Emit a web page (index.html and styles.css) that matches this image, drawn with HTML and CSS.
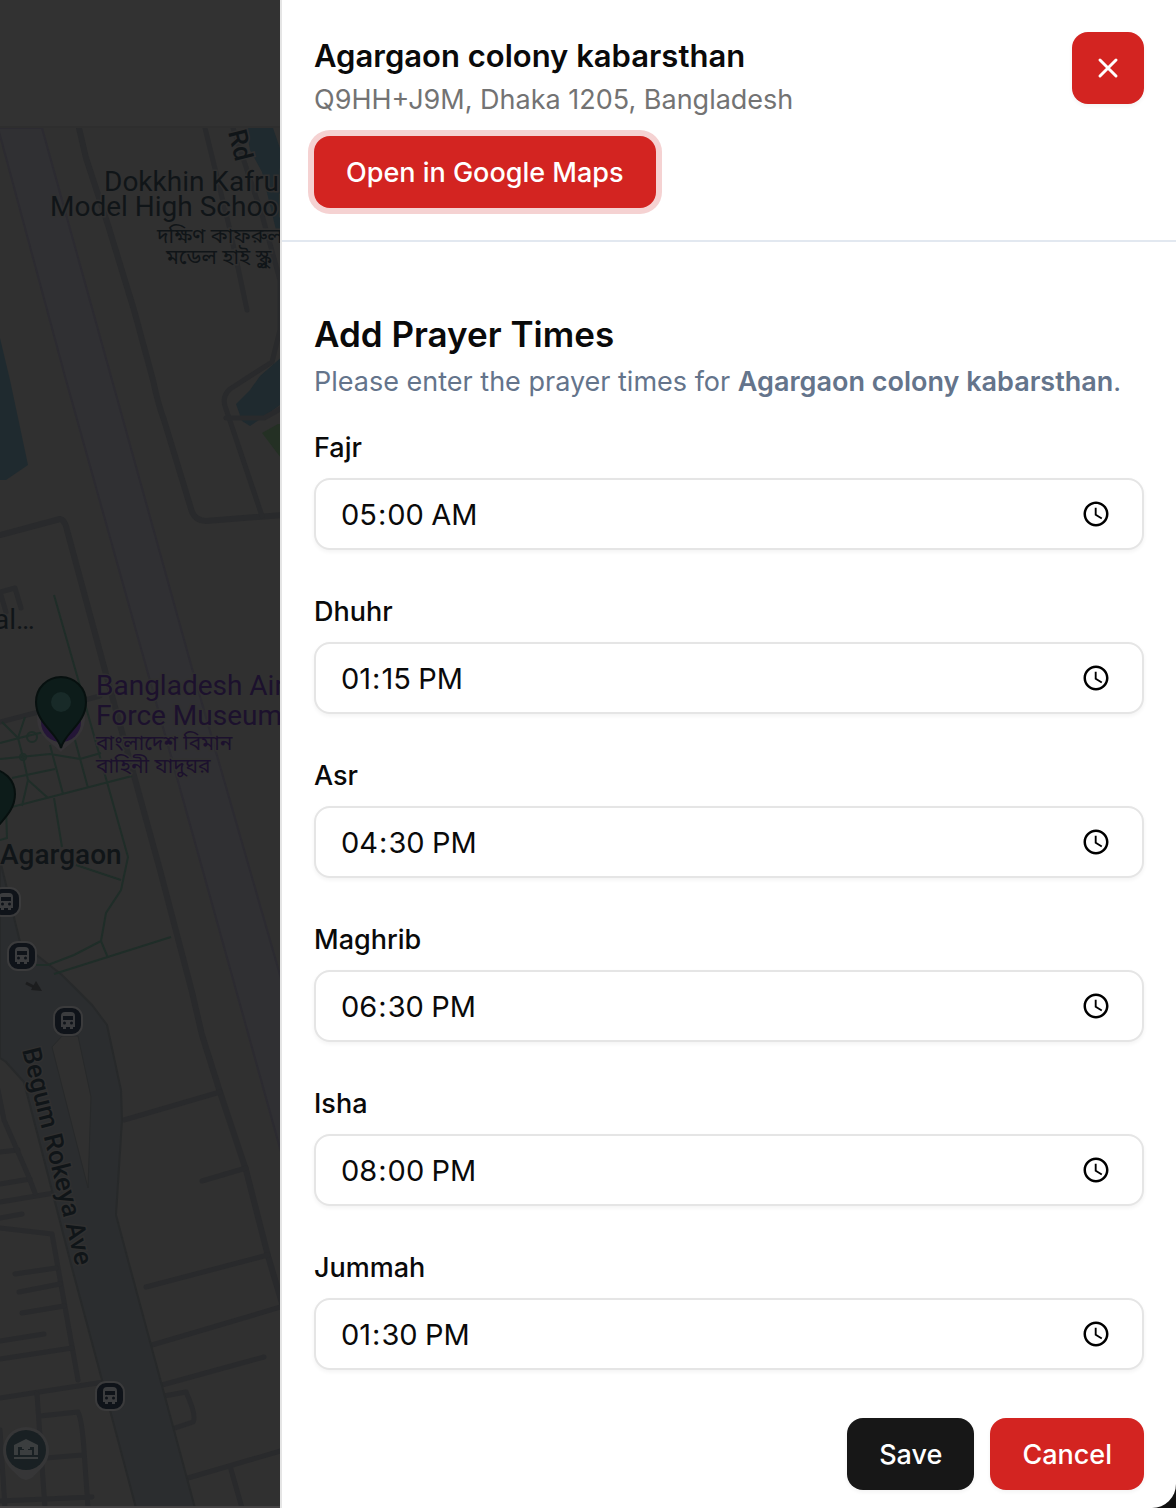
FILE: index.html
```html
<!DOCTYPE html>
<html lang="en-US">
<head>
<meta charset="utf-8">
<meta name="viewport" content="width=device-width, initial-scale=1">
<title>Add Prayer Times</title>
<link rel="stylesheet" href="styles.css">
</head>
<body>
<div class="app">
  <div class="backdrop">
    <div class="topbar"></div>
    <svg class="map" viewBox="0 128 280 1378" preserveAspectRatio="xMinYMin slice" role="img" aria-label="Map of Agargaon">
      <defs>
        <g id="bus">
          <rect x="-14" y="-14" width="28" height="28" rx="10" fill="#0f1319" stroke="#3b3b3c" stroke-width="2"/>
          <path fill="#3b3c3e" fill-rule="evenodd" d="M-7-5q0-4 4-4h6q4 0 4 4V6H5V8H2V6H-2V8H-5V6H-7ZM-5-5V-1H5V-5ZM-5 2a1.500 1.500 0 1 0 3 0a1.500 1.500 0 1 0-3 0ZM2 2a1.500 1.500 0 1 0 3 0a1.500 1.500 0 1 0-3 0Z"/>
        </g>
        <path id="pin" d="M0 46C-3 31-25 22-25 0A25 25 0 0 1 25 0C25 22 3 31 0 46Z" fill="#0d1c1a" stroke="#07100f" stroke-width="2"/>
      </defs>

      <path class="rail" d="M-2 128L66 380L149 677L236 990L350 1400V1220L280 975L193 672L112 380L42 128Z"/>

      <g class="water">
        <path d="M246 128H273L284 160V230H276L262 172L250 150Z"/>
        <path d="M0 338L10 380L28 465L6 480H0Z"/>
        <path d="M284 355L260 376L250 390L236 404L242 421L250 426L262 418L284 402Z"/>
      </g>
      <path d="M262 433L278 424L284 424V462Z" fill="#243024"/>

      <g class="roads">
        <path d="M79 128L86 158L108 225L134 310L153 380Q158 404 164 420L192 512Q196 521 206 521L282 515" stroke-width="6"/>
        <path d="M205 128L230 230L247 310"/>
        <path d="M233 128L262 215L280 280V330L272 362L230 389Q222 396 225 406L262 516"/>
        <path d="M226 418H264L282 408"/>
        <path d="M0 535L60 519Q65 520 67 530L106 674L160 870L192 992L202 1035L220 1092L246 1170L268 1256L290 1330" stroke-width="6"/>
        <path d="M0 722L100 696M0 592L15 588L21 608M0 592L6 612"/>
        <path d="M124 1120L220 1092M202 1181L246 1168M146 1287L268 1255M152 1345L284 1306M162 1385L264 1357"/>
        <path d="M164 1396L186 1392Q197 1416 193 1422L175 1428M188 1478L284 1450M230 1466L242 1508"/>
        <path d="M0 1398L104 1382M0 1228L52 1234L78 1380M0 1152L18 1150M0 1184L30 1179M0 1202L60 1192M0 1218L22 1214"/>
        <path d="M-2 1090L4 1120L28 1175L35 1193M15 1274L56 1268M19 1292L60 1284M22 1313L64 1306M0 1341L44 1334M0 1359L72 1348"/>
        <path d="M37 1394L45 1508M40 1416L78 1412Q82 1420 84 1450L88 1508M46 1458L82 1455M0 1501L92 1497M0 1430L5 1508"/>
      </g>

      <path class="avenue" d="M0 860L20 942L62 975L92 1005L107 1025L121 1090L122 1120L116 1215L128 1260L195 1508H136L102 1380L72 1268L24 1082L6 1062L0 1058Z"/>
      <path d="M52 1047L62 1036L78 1036L91 1097L88 1188Z" fill="#303030" stroke="#27292a"/>

      <g class="paths">
        <path d="M54 595L80 686L100 757L128 857L121 890L106 913L101 941L74 955L48 965H36M101 941L108 958M54 974L171 937M0 810L132 776M0 743L19 738L52 730M2 722L18 738L25 717M18 738L23 757L28 780L22 806M0 759L50 754L80 759L101 753M50 745L63 794M75 740L88 788M12 778L55 769M28 780L48 798M54 798L62 847M76 865L121 880M6 808L7 838L0 840"/>
        <circle cx="32" cy="737" r="5"/><circle cx="23" cy="757" r="3"/>
      </g>

      <path d="M37 718A24 24 0 1 1 85 718C85 737 68 744 61 752C54 744 37 737 37 718Z" fill="#363437"/>
      <circle cx="61" cy="722" r="20" fill="#241537"/>
      <use href="#pin" x="61" y="702"/><circle cx="61" cy="702" r="10" fill="#182a28"/>
      <use href="#pin" x="-10" y="794"/>

      <use href="#bus" x="6" y="902"/><use href="#bus" x="22" y="956"/><use href="#bus" x="68" y="1021"/><use href="#bus" x="110" y="1396"/>
      <path d="M26 983L34 987" stroke="#1c1d1e" stroke-width="3"/><path d="M36 981L42 991L31 990Z" fill="#1c1d1e"/>

      <path d="M26 1427A23 23 0 0 1 49 1450C49 1465 38 1471 33 1477Q26 1483 19 1477C14 1471 3 1465 3 1450A23 23 0 0 1 26 1427Z" fill="#363637"/>
      <circle cx="26" cy="1450" r="20" fill="#192023"/>
      <path d="M14 1445L26 1439L38 1445V1447H14ZM14 1447H18V1455H14ZM34 1447H38V1455H34ZM22 1447H30V1449H22ZM20 1450H24V1455H20ZM28 1450H32V1455H28ZM24 1447H28V1455H24ZM14 1457H38V1459H14Z" fill="#3b3e3f"/>

      <g class="labels">
        <text x="104" y="191">Dokkhin Kafrul</text>
        <text x="50" y="216">Model High School</text>
        <text class="bn" x="157" y="243">দক্ষিণ কাফরুল</text>
        <text class="bn" x="166" y="264">মডেল হাই স্কুল</text>
        <text x="-6" y="629">al…</text>
        <g class="museum">
          <text x="96" y="695">Bangladesh Air</text>
          <text x="96" y="725">Force Museum</text>
          <text class="bn" x="96" y="750">বাংলাদেশ বিমান</text>
          <text class="bn" x="96" y="773">বাহিনী যাদুঘর</text>
        </g>
        <text class="place" x="0" y="864">Agargaon</text>
        <text class="street" transform="translate(228 132) rotate(76)">Rd</text>
        <text class="street" transform="translate(22 1050) rotate(76)">Begum Rokeya Ave</text>
      </g>
    </svg>
  </div>

  <main class="drawer">
    <header class="drawer-header">
      <div class="place-info">
        <h1 class="place-name">Agargaon colony kabarsthan</h1>
        <p class="address">Q9HH+J9M, Dhaka 1205, Bangladesh</p>
        <button class="btn btn-red btn-focused" type="button">Open in Google Maps</button>
      </div>
      <button class="btn btn-red btn-close" type="button" aria-label="Close">
        <svg width="32" height="32" viewBox="0 0 32 32" fill="none" stroke="currentColor" stroke-width="3" stroke-linecap="round"><path d="M8 8L24 24M24 8L8 24"/></svg>
      </button>
    </header>

    <form class="prayer-form">
      <h2 class="form-title">Add Prayer Times</h2>
      <p class="form-intro">Please enter the prayer times for <strong>Agargaon colony kabarsthan</strong>.</p>
      <div class="fields">
        <div class="field"><label for="fajr">Fajr</label><input id="fajr" type="time" value="05:00"></div>
        <div class="field"><label for="dhuhr">Dhuhr</label><input id="dhuhr" type="time" value="13:15"></div>
        <div class="field"><label for="asr">Asr</label><input id="asr" type="time" value="16:30"></div>
        <div class="field"><label for="maghrib">Maghrib</label><input id="maghrib" type="time" value="18:30"></div>
        <div class="field"><label for="isha">Isha</label><input id="isha" type="time" value="20:00"></div>
        <div class="field"><label for="jummah">Jummah</label><input id="jummah" type="time" value="13:30"></div>
      </div>
      <div class="actions">
        <button class="btn btn-dark" type="submit">Save</button>
        <button class="btn btn-red" type="button">Cancel</button>
      </div>
    </form>
  </main>
</div>
</body>
</html>
```
FILE: styles.css
```css
* { box-sizing: border-box; }

body {
  margin: 0;
  background: #111;
  color: #0a0a0a;
  font-family: Inter, "Liberation Sans", sans-serif;
  font-size: 27px;
}

h1, h2, p { margin: 0; }

.app {
  display: grid;
  grid-template-columns: minmax(0, 1fr) minmax(0, 896px);
  min-height: 100vh;
}

/* Dimmed map behind the drawer */
.backdrop {
  display: flex;
  flex-direction: column;
  min-width: 0;
  background: #303030;
  border-bottom: 2px solid #454344;
}

.topbar {
  height: 128px;
  background: #323232;
  border-bottom: 2px solid #2e2e2e;
}

.map {
  display: block;
  width: 100%;
  height: 0;
  flex: 1;
}

.rail { fill: #303033; stroke: #2c2b31; stroke-width: 2; }
.water { fill: #1f2a2f; }
.roads { fill: none; stroke: #292a2c; stroke-width: 5; stroke-linecap: round; stroke-linejoin: round; }
.avenue { fill: #2b2d2f; stroke: #27292a; stroke-width: 2; }
.paths { fill: none; stroke: #1f2d28; stroke-width: 2; }

.labels {
  font-family: Roboto, sans-serif;
  font-size: 28px;
  fill: #101518;
  stroke: #303030;
  stroke-width: 3;
  paint-order: stroke;
}
.labels .bn { font-family: "Noto Sans Bengali", "Noto Sans", sans-serif; font-size: 21px; }
.labels .place { font-weight: 500; }
.labels .street { font-size: 26px; font-weight: 500; }
.museum { fill: #1c112d; }

/* Drawer */
.drawer {
  min-width: 0;
  background: #fff;
  border-left: 2px solid #e5e5e5;
  border-bottom-right-radius: 24px;
}

.drawer-header {
  display: flex;
  justify-content: space-between;
  align-items: flex-start;
  gap: 16px;
  padding: 32px;
  border-bottom: 2px solid #e2e8f0;
}

.place-name { font-size: 31px; font-weight: 600; line-height: 48px; }
.address { margin-bottom: 16px; line-height: 40px; color: #737373; }

.btn {
  height: 72px;
  padding: 0 32px;
  border: 0;
  border-radius: 16px;
  color: #fff;
  font: inherit;
  font-weight: 500;
  box-shadow: 0 2px 4px rgba(0, 0, 0, 0.05);
}
.btn-red { background: #d32421; }
.btn-dark { background: #171717; }
.btn-focused { box-shadow: 0 0 0 6px #f5d2d2; }
.btn-close {
  display: grid;
  place-items: center;
  flex: none;
  width: 72px;
  padding: 0;
}

.prayer-form { padding: 72px 32px 18px; }
.form-title { margin-bottom: 8px; font-size: 35px; font-weight: 600; line-height: 40px; }
.form-intro { margin-bottom: 32px; line-height: 40px; color: #64748b; }
.form-intro strong { font-weight: 600; }

.fields { display: grid; gap: 48px; }
.field { display: grid; gap: 16px; }
.field label { font-weight: 500; line-height: 28px; }
.field input {
  width: 100%;
  height: 72px;
  padding: 0 28px 0 24px;
  border: 2px solid #e5e5e5;
  border-radius: 16px;
  background: #fff;
  color: inherit;
  font: inherit;
  font-size: 29px;
  box-shadow: 0 2px 4px rgba(0, 0, 0, 0.05);
}

.actions {
  display: flex;
  justify-content: flex-end;
  gap: 16px;
  margin-top: 48px;
}
```
